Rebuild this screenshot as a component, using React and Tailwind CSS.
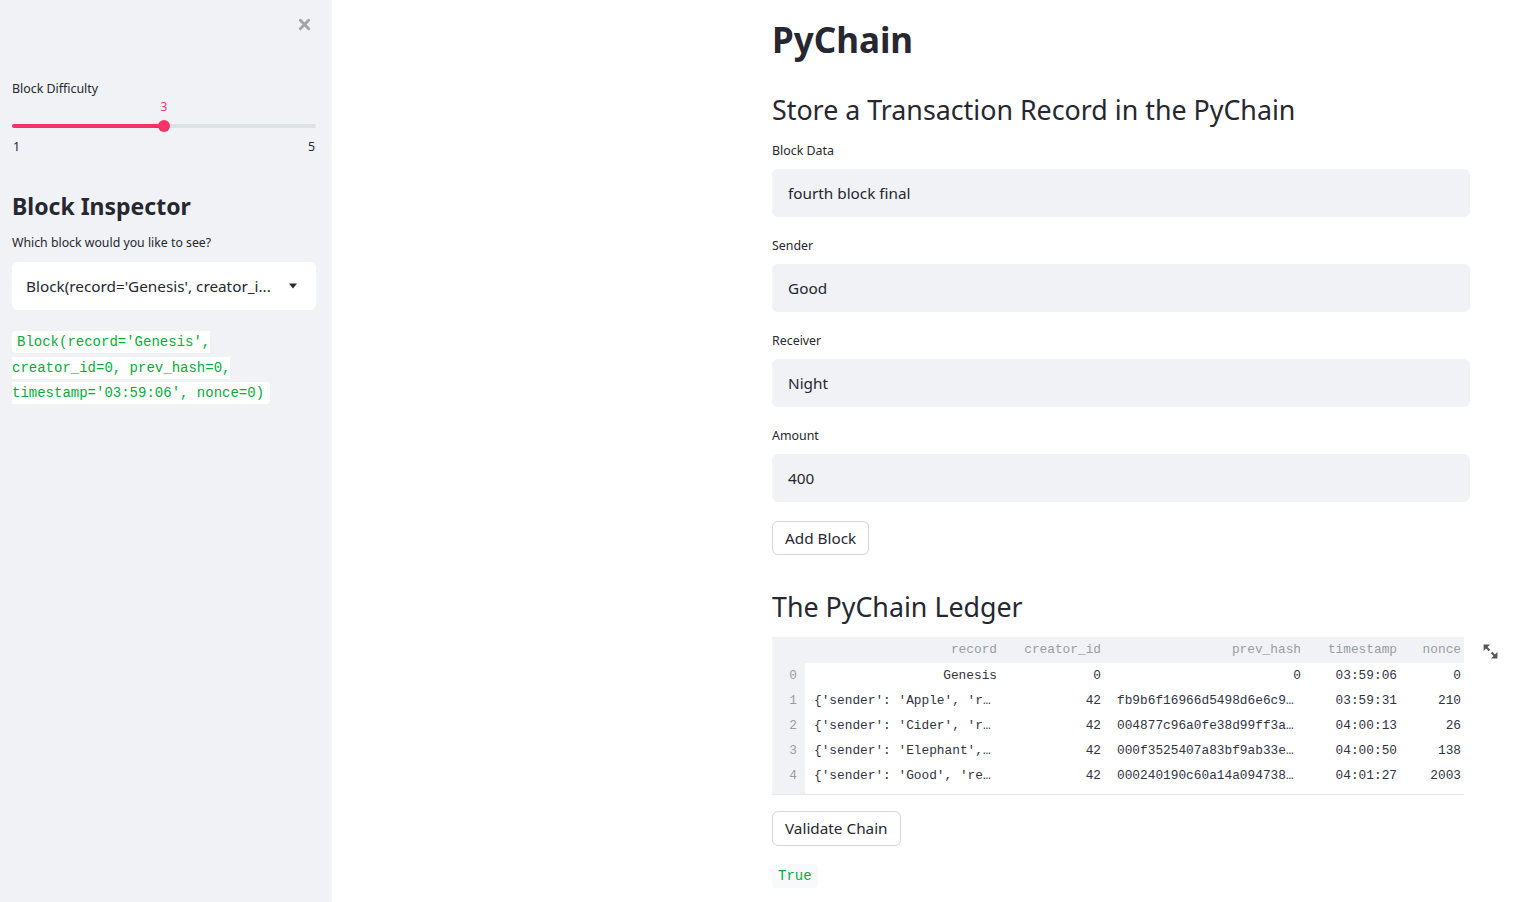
import { useState } from 'react';

const sans = { fontFamily: '"Noto Sans", "Open Sans", sans-serif' };
const mono = { fontFamily: '"Liberation Mono", "DejaVu Sans Mono", monospace' };

const rows = [
    ['0', 'Genesis', '0', '0', '03:59:06', '0', false],
    ['1', "{'sender': 'Apple', 'r…", '42', 'fb9b6f16966d5498d6e6c9…', '03:59:31', '210', true],
    ['2', "{'sender': 'Cider', 'r…", '42', '004877c96a0fe38d99ff3a…', '04:00:13', '26', true],
    ['3', "{'sender': 'Elephant',…", '42', '000f3525407a83bf9ab33e…', '04:00:50', '138', true],
    ['4', "{'sender': 'Good', 're…", '42', '000240190c60a14a094738…', '04:01:27', '2003', true],
];

const Field = ({ label, value }) => (
    <div className="flex flex-col">
        <label className="h-[20px] leading-[22px] text-[12.4px] text-[#262730]">{label}</label>
        <div className="mt-[9px] h-[48px] rounded-md bg-[#f0f2f6] flex items-center px-4 text-[15.3px] text-[#262730]">
            {value}
        </div>
    </div>
);

const Sidebar = () => (
    <aside className="relative w-[332px] shrink-0 bg-[#f0f2f6] min-h-[902px] pl-3 pr-4 text-[#262730]">
        <button className="absolute left-[296px] top-[16px] w-4 h-4 flex items-center justify-center text-[#a3a3a8]">
            <svg width="13" height="13" viewBox="0 0 14 14">
                <path d="M2.5 2.5 L11.5 11.5 M11.5 2.5 L2.5 11.5" stroke="currentColor" strokeWidth="3.2" strokeLinecap="round" />
            </svg>
        </button>

        <div className="pt-[78px] h-[98px] text-[12.4px] leading-[22px]">Block Difficulty</div>

        <div className="relative h-[60px]">
            <span className="absolute left-[136px] top-[1px] w-8 text-center text-[12px] leading-[16px] text-[#f63366]">3</span>
            <div className="absolute left-0 right-0 top-[26px] h-[4px] rounded bg-[#dde1e8]" />
            <div className="absolute left-0 w-[152px] top-[26px] h-[4px] rounded-l bg-[#f63366]" />
            <div className="absolute left-[146px] top-[22px] w-[12px] h-[12px] rounded-full bg-[#f63366]" />
            <div className="absolute left-0 right-0 top-[41px] flex justify-between text-[12.4px] leading-[16px] pl-[1px] pr-[1px]">
                <span>1</span>
                <span>5</span>
            </div>
        </div>

        <h2 className="mt-[30px] h-[36px] leading-[36px] text-[23px] font-bold">Block Inspector</h2>
        <p className="mt-[8px] h-[20px] leading-[22px] text-[12.3px]">Which block would you like to see?</p>

        <div className="mt-[10px] h-[48px] rounded-md bg-white flex items-center justify-between pl-[14px] pr-[18px] text-[15.3px]">
            <span className="whitespace-nowrap overflow-hidden">Block(record='Genesis', creator_i...</span>
            <svg width="10" height="6" viewBox="0 0 10 6" className="ml-3 shrink-0">
                <path d="M1 0.5 L9 0.5 L5 5.5 Z" fill="#262730" />
            </svg>
        </div>

        <div className="mt-[20px] pr-[30px] text-[14px] leading-[25.5px] text-[#09ab3b]" style={mono}>
            <span className="bg-white rounded pl-[5px] pr-[6px] py-[3px]">
                Block(record='Genesis', creator_id=0, prev_hash=0, timestamp='03:59:06', nonce=0)
            </span>
        </div>
    </aside>
);

const Ledger = () => {
    const cols = 'grid grid-cols-[33px_202px_104px_200px_96px_57px]';
    return (
        <div className="relative">
            <div className="w-[692px] border-b border-[#e6e8ec] text-[12.8px]" style={mono}>
                <div className={`${cols} h-[26px] items-center bg-[#f0f2f6] text-[#9a9ca4]`}>
                    <span />
                    <span className="text-right pr-[10px]">record</span>
                    <span className="text-right pr-[10px]">creator_id</span>
                    <span className="text-right pr-[10px]">prev_hash</span>
                    <span className="text-right pr-[10px]">timestamp</span>
                    <span className="text-right pr-[3px]">nonce</span>
                </div>
                {rows.map(([i, rec, cid, hash, ts, nonce, long]) => (
                    <div key={i} className={`${cols} h-[25px] items-center text-[#31333f]`}>
                        <span className="h-full flex items-center justify-end pr-[8px] bg-[#f0f2f6] text-[#9a9ca4]">{i}</span>
                        <span className={long ? 'pl-[9px] whitespace-nowrap' : 'text-right pr-[10px]'}>{rec}</span>
                        <span className="text-right pr-[10px]">{cid}</span>
                        <span className={long ? 'pl-[6px] whitespace-nowrap' : 'text-right pr-[10px]'}>{hash}</span>
                        <span className="text-right pr-[10px]">{ts}</span>
                        <span className="text-right pr-[3px]">{nonce}</span>
                    </div>
                ))}
                <div className={`${cols} h-[6px]`}>
                    <span className="bg-[#f0f2f6]" />
                </div>
            </div>
            <svg className="absolute left-[710px] top-[6px]" width="17" height="17" viewBox="0 0 16 16">
                <path d="M1.5 1.5 L7.5 1.5 L1.5 7.5 Z" fill="#55575f" />
                <path d="M4 4 L7 7" stroke="#55575f" strokeWidth="2" />
                <path d="M14.5 14.5 L8.5 14.5 L14.5 8.5 Z" fill="#55575f" />
                <path d="M9 9 L12 12" stroke="#55575f" strokeWidth="2" />
            </svg>
        </div>
    );
};

const App = () => {
    const [valid] = useState(true);
    return (
        <div className="flex w-[1514px] min-h-[902px] bg-white" style={sans}>
            <Sidebar />
            <main className="flex-1 pl-[440px] text-[#262730]">
                <div className="w-[698px] flex flex-col">
                    <h1 className="mt-[16px] h-[48px] leading-[48px] text-[35px] font-bold">PyChain</h1>
                    <h2 className="mt-[26px] h-[40px] leading-[40px] text-[26.8px] font-normal">Store a Transaction Record in the PyChain</h2>

                    <div className="mt-[10px] flex flex-col gap-[18px]">
                        <Field label="Block Data" value="fourth block final" />
                        <Field label="Sender" value="Good" />
                        <Field label="Receiver" value="Night" />
                        <Field label="Amount" value="400" />
                    </div>

                    <button className="mt-[19px] self-start h-[34px] px-3 rounded-md border border-[#d5d7de] bg-white text-[15.3px]">
                        Add Block
                    </button>

                    <h2 className="mt-[32px] h-[40px] leading-[40px] text-[26.8px] font-normal">The PyChain Ledger</h2>

                    <div className="mt-[10px]">
                        <Ledger />
                    </div>

                    <button className="mt-[16px] self-start h-[35px] px-3 rounded-md border border-[#d5d7de] bg-white text-[15.3px]">
                        Validate Chain
                    </button>

                    <div className="mt-[18px] self-start h-[24px] px-[6px] rounded bg-[#f8f9fb] text-[14px] leading-[24px] text-[#09ab3b]" style={mono}>
                        {valid ? 'True' : 'False'}
                    </div>
                </div>
            </main>
        </div>
    );
};

export default App;
